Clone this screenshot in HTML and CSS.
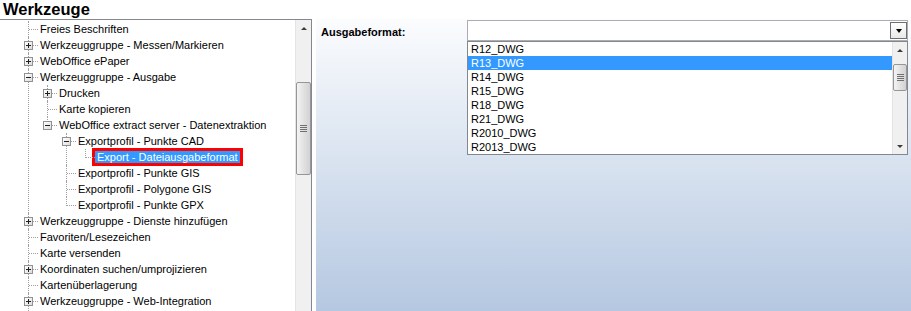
FILE: index.html
```html
<!DOCTYPE html>
<html lang="de">
<head>
    <meta charset="UTF-8">
    <meta name="viewport" content="width=device-width, initial-scale=1.0">
    <title>Werkzeuge</title>
    <link rel="stylesheet" href="styles.css">
</head>
<body>
    <div class="title">Werkzeuge</div>
    <div class="workspace">
        <div class="tree-panel">
            <div class="tree-view">
                <ul class="tree">
                    <li><div class="row"><span class="label">Freies Beschriften</span></div></li>
                    <li><div class="row"><span class="toggle plus"></span><span class="label">Werkzeuggruppe - Messen/Markieren</span></div></li>
                    <li><div class="row"><span class="toggle plus"></span><span class="label">WebOffice ePaper</span></div></li>
                    <li>
                        <div class="row"><span class="toggle"></span><span class="label">Werkzeuggruppe - Ausgabe</span></div>
                        <ul>
                            <li><div class="row"><span class="toggle plus"></span><span class="label">Drucken</span></div></li>
                            <li><div class="row"><span class="label">Karte kopieren</span></div></li>
                            <li class="last">
                                <div class="row"><span class="toggle"></span><span class="label">WebOffice extract server - Datenextraktion</span></div>
                                <ul>
                                    <li>
                                        <div class="row"><span class="toggle"></span><span class="label">Exportprofil - Punkte CAD</span></div>
                                        <ul>
                                            <li class="last"><div class="row"><span class="label selected">Export - Dateiausgabeformat</span></div></li>
                                        </ul>
                                    </li>
                                    <li><div class="row"><span class="label">Exportprofil - Punkte GIS</span></div></li>
                                    <li><div class="row"><span class="label">Exportprofil - Polygone GIS</span></div></li>
                                    <li class="last"><div class="row"><span class="label">Exportprofil - Punkte GPX</span></div></li>
                                </ul>
                            </li>
                        </ul>
                    </li>
                    <li><div class="row"><span class="toggle plus"></span><span class="label">Werkzeuggruppe - Dienste hinzufügen</span></div></li>
                    <li><div class="row"><span class="label">Favoriten/Lesezeichen</span></div></li>
                    <li><div class="row"><span class="label">Karte versenden</span></div></li>
                    <li><div class="row"><span class="toggle plus"></span><span class="label">Koordinaten suchen/umprojizieren</span></div></li>
                    <li><div class="row"><span class="label">Kartenüberlagerung</span></div></li>
                    <li class="open-end"><div class="row"><span class="toggle plus"></span><span class="label">Werkzeuggruppe - Web-Integration</span></div></li>
                </ul>
            </div>
            <div class="scrollbar tree-scroll">
                <div class="scroll-btn"><span class="arrow-up"></span></div>
                <div class="scroll-thumb"><span class="grip"></span></div>
            </div>
        </div>
        <div class="content">
            <div class="field">
                <div class="field-label">Ausgabeformat:</div>
                <div class="select">
                    <div class="select-box">
                        <span class="select-button"><span class="arrow-down"></span></span>
                    </div>
                    <div class="dropdown">
                        <ul class="options">
                            <li>R12_DWG</li>
                            <li class="active">R13_DWG</li>
                            <li>R14_DWG</li>
                            <li>R15_DWG</li>
                            <li>R18_DWG</li>
                            <li>R21_DWG</li>
                            <li>R2010_DWG</li>
                            <li>R2013_DWG</li>
                        </ul>
                        <div class="scrollbar list-scroll">
                            <div class="scroll-btn"><span class="arrow-up"></span></div>
                            <div class="scroll-thumb small"><span class="grip"></span></div>
                            <div class="scroll-btn bottom"><span class="arrow-down"></span></div>
                        </div>
                    </div>
                </div>
            </div>
        </div>
    </div>
</body>
</html>
```

FILE: styles.css
```css
body {
    margin: 0;
    background: #fff;
    font-family: "Liberation Sans", Arial, sans-serif;
    color: #000;
    overflow: hidden;
}
.title {
    height: 19px;
    line-height: 19px;
    padding-left: 3px;
    font-size: 16.5px;
    font-weight: bold;
}
.workspace {
    display: flex;
    gap: 4px;
    height: 292px;
}

/* tree */
.tree-panel {
    display: flex;
    width: 311px;
    border-top: 1px solid #828790;
    border-right: 1px solid #828790;
}
.tree-view {
    flex: 1;
    overflow: hidden;
    padding-top: 1px;
}
.tree,
.tree ul {
    list-style: none;
    margin: 0 0 0 19px;
    padding: 0;
}
.tree {
    margin-left: 28px;
}
.tree li {
    position: relative;
}
.tree li.open-end {
    padding-bottom: 4px;
}
.tree li::before {
    content: '';
    position: absolute;
    left: 0;
    top: 0;
    bottom: 0;
    border-left: 1px dotted #a0a0a0;
}
.tree li.last::before {
    bottom: auto;
    height: 9px;
}
.row {
    position: relative;
    display: flex;
    align-items: center;
    height: 16px;
    padding-left: 10px;
    font-size: 11px;
    white-space: nowrap;
}
.row::before {
    content: '';
    position: absolute;
    left: 1px;
    top: 8px;
    width: 9px;
    border-top: 1px dotted #a0a0a0;
}
.label {
    padding: 0 2px;
    line-height: 12px;
}
.label.selected {
    background: #3399ff;
    color: #fff;
    outline: 3px solid #ff0000;
}
.toggle {
    position: absolute;
    left: -4px;
    top: 4px;
    z-index: 1;
    width: 7px;
    height: 7px;
    border: 1px solid #919191;
    background: linear-gradient(135deg, #fff, #dcdcdc);
}
.toggle::before,
.toggle.plus::after {
    content: '';
    position: absolute;
    background: #1f1f1f;
}
.toggle::before {
    left: 1px;
    top: 3px;
    width: 5px;
    height: 1px;
}
.toggle.plus::after {
    left: 3px;
    top: 1px;
    width: 1px;
    height: 5px;
}

/* scrollbars */
.scrollbar {
    display: flex;
    flex-direction: column;
    background: #f0f0f0;
    border-left: 1px solid #e3e3e3;
}
.tree-scroll {
    width: 15px;
}
.scroll-btn {
    display: flex;
    align-items: center;
    justify-content: center;
    height: 17px;
}
.scroll-btn.bottom {
    margin-top: auto;
}
.arrow-up,
.arrow-down {
    width: 0;
    height: 0;
    border-left: 3px solid transparent;
    border-right: 3px solid transparent;
}
.arrow-up {
    border-bottom: 3px solid #3c3c3c;
}
.arrow-down {
    border-top: 3px solid #3c3c3c;
}
.scroll-thumb {
    display: flex;
    align-items: center;
    justify-content: center;
    height: 91px;
    margin-top: 45px;
    border: 1px solid #969696;
    border-radius: 2px;
    background: linear-gradient(to right, #f4f4f4, #e2e2e2 50%, #d2d2d2);
}
.scroll-thumb.small {
    height: 25px;
    margin-top: 6px;
}
.grip {
    width: 7px;
    height: 7px;
    background: repeating-linear-gradient(to bottom, #707070 0 1px, transparent 1px 2px);
}

/* content */
.content {
    flex: 1;
    background: linear-gradient(to bottom, #fbfcfe, #b5c8e1);
}
.field {
    display: flex;
    align-items: flex-start;
    margin-top: 1px;
    padding-left: 5px;
}
.field-label {
    width: 146px;
    padding-top: 6px;
    font-size: 11px;
    font-weight: bold;
    line-height: 13px;
}
.select {
    position: relative;
    width: 441px;
}
.select-box {
    display: flex;
    justify-content: flex-end;
    height: 19px;
    border: 1px solid #abadb3;
    background: #fff;
}
.select-button {
    display: flex;
    align-items: center;
    justify-content: center;
    width: 15px;
    height: 15px;
    margin: 1px 0 0;
    border: 1px solid #6e6e6e;
    background: linear-gradient(to bottom, #fff, #e8e8e8);
}
.select-button .arrow-down {
    border-left-width: 3.5px;
    border-right-width: 3.5px;
    border-top: 4px solid #000;
}
.dropdown {
    position: absolute;
    top: 21px;
    left: 0;
    right: 0;
    display: flex;
    height: 112px;
    border: 1px solid #828790;
    background: #fff;
}
.options {
    flex: 1;
    list-style: none;
    margin: 0;
    padding: 0;
}
.options li {
    height: 14px;
    line-height: 14px;
    padding-left: 3px;
    font-size: 11px;
}
.options li.active {
    background: #3399ff;
    color: #fff;
}
.list-scroll {
    width: 14px;
}
.list-scroll .scroll-btn {
    height: 16px;
}
```
